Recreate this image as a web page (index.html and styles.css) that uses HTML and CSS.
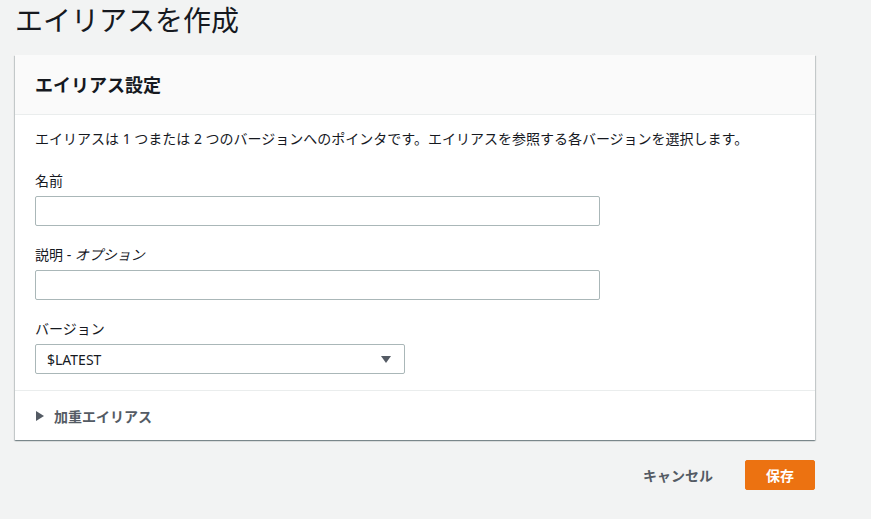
FILE: index.html
```html
<!DOCTYPE html>
<html lang="ja">
<head>
<meta charset="utf-8">
<title>エイリアスを作成</title>
<link rel="stylesheet" href="styles.css">
</head>
<body>
<div class="page">
  <h1 class="title">エイリアスを作成</h1>
  <section class="card">
    <header class="card-header">
      <h2>エイリアス設定</h2>
    </header>
    <div class="card-body">
      <p class="desc">エイリアスは 1 つまたは 2 つのバージョンへのポインタです。エイリアスを参照する各バージョンを選択します。</p>
      <div class="field">
        <label class="label">名前</label>
        <div class="input wide"></div>
      </div>
      <div class="field">
        <label class="label">説明 - <i>オプション</i></label>
        <div class="input wide"></div>
      </div>
      <div class="field">
        <label class="label">バージョン</label>
        <div class="input select">
          <span>$LATEST</span>
          <svg class="caret" width="10" height="7" viewBox="0 0 10 7"><path d="M0 0H10L5 7Z" fill="#545b64"/></svg>
        </div>
      </div>
    </div>
    <div class="card-footer">
      <svg class="expander" width="8" height="10" viewBox="0 0 8 10"><path d="M0 0L8 5L0 10Z" fill="#545b64"/></svg>
      <span>加重エイリアス</span>
    </div>
  </section>
  <div class="actions">
    <button class="btn-link">キャンセル</button>
    <button class="btn-primary">保存</button>
  </div>
</div>
</body>
</html>
```
FILE: styles.css
```css
html, body {
  margin: 0;
  padding: 0;
  background: #f2f3f3;
  font-family: "Noto Sans", "Noto Sans CJK JP", sans-serif;
  color: #16191f;
}
.page {
  width: 800px;
  margin-left: 15px;
}
.title {
  margin: 0;
  font-size: 28px;
  font-weight: 400;
  line-height: 40px;
}
.card {
  margin-top: 15px;
  background: #fff;
  box-shadow: 0 1px 1px 0 rgba(0, 28, 36, 0.3), 1px 1px 1px 0 rgba(0, 28, 36, 0.15), -1px 1px 1px 0 rgba(0, 28, 36, 0.15);
}
.card-header {
  height: 59px;
  background: #fafafa;
  border-bottom: 1px solid #eaeded;
  display: flex;
  align-items: center;
  padding: 0 20px;
}
.card-header h2 {
  margin: 0;
  font-size: 18px;
  font-weight: 700;
  line-height: 24px;
}
.card-body {
  padding: 13px 20px 16px;
  display: flex;
  flex-direction: column;
  gap: 18px;
}
.desc {
  margin: 0 0 2px;
  font-size: 14px;
  line-height: 22px;
}
.field {
  display: flex;
  flex-direction: column;
  gap: 4px;
}
.label {
  font-size: 14px;
  line-height: 22px;
}
.input {
  box-sizing: border-box;
  height: 30px;
  border: 1px solid #aab7b8;
  border-radius: 2px;
  background: #fff;
}
.wide {
  width: 565px;
}
.select {
  width: 370px;
  display: flex;
  align-items: center;
  justify-content: space-between;
  padding: 0 13px 0 11px;
  font-size: 14px;
}
.card-footer {
  border-top: 1px solid #eaeded;
  height: 49px;
  display: flex;
  align-items: center;
  gap: 10px;
  padding: 0 21px;
  font-size: 14px;
  font-weight: 700;
  color: #545b64;
}
.actions {
  display: flex;
  justify-content: flex-end;
  align-items: center;
  gap: 12px;
  margin-top: 20px;
}
.btn-link, .btn-primary {
  font-family: inherit;
  font-size: 14px;
  font-weight: 700;
  height: 30px;
  border-radius: 2px;
  cursor: pointer;
}
.btn-link {
  background: none;
  border: none;
  color: #545b64;
  padding: 0 20px;
}
.btn-primary {
  width: 70px;
  background: #ec7211;
  border: 1px solid #ec7211;
  color: #fff;
  padding: 0;
}
```
